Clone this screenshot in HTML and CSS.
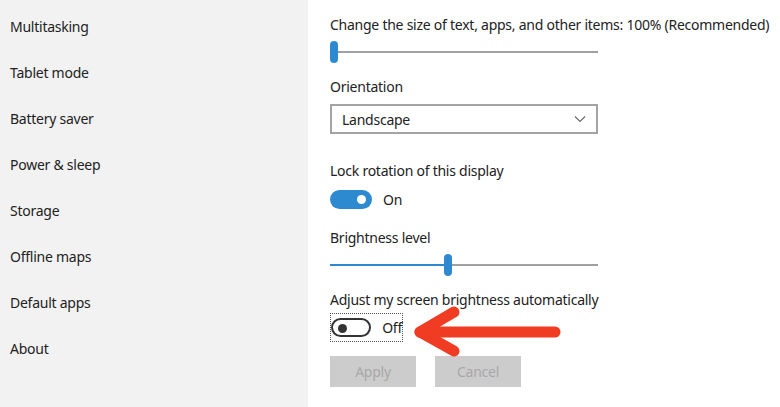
FILE: index.html
```html
<!DOCTYPE html>
<html>

<head>
    <meta charset="utf-8" />
    <title>Display settings</title>
    <meta name="viewport" content="width=device-width, initial-scale=1">
    <link rel="stylesheet" href="styles.css">
</head>

<body>
    <div class="page">
        <ul class="menu">
            <li>Multitasking</li>
            <li>Tablet mode</li>
            <li>Battery saver</li>
            <li>Power &amp; sleep</li>
            <li>Storage</li>
            <li>Offline maps</li>
            <li>Default apps</li>
            <li>About</li>
        </ul>

        <div class="content">
            <div class="label">Change the size of text, apps, and other items: 100% (Recommended)</div>
            <div class="slider slider-scale">
                <div class="track"></div>
                <div class="fill" style="width: 0px"></div>
                <div class="thumb" style="left: 0px"></div>
            </div>

            <div class="label label-orient">Orientation</div>
            <div class="select">
                <span>Landscape</span>
                <svg class="chevron" width="12" height="8" viewBox="0 0 12 8">
                    <polyline points="1,1.5 6,6.5 11,1.5" fill="none" stroke="#666" stroke-width="1.1" />
                </svg>
            </div>

            <div class="label label-lock">Lock rotation of this display</div>
            <div class="switch-row">
                <div class="switch on"><div class="knob"></div></div>
                <span class="state">On</span>
            </div>

            <div class="label label-bright">Brightness level</div>
            <div class="slider slider-bright">
                <div class="track"></div>
                <div class="fill" style="width: 118px"></div>
                <div class="thumb" style="left: 114px"></div>
            </div>

            <div class="label label-auto">Adjust my screen brightness automatically</div>
            <div class="switch-row focus">
                <div class="switch off"><div class="knob"></div></div>
                <span class="state">Off</span>
            </div>

            <div class="buttons">
                <button type="button" disabled>Apply</button>
                <button type="button" disabled>Cancel</button>
            </div>
        </div>

        <svg class="arrow" width="780" height="407" viewBox="0 0 780 407">
            <g fill="none" stroke="#f03c22" stroke-width="11" stroke-linecap="round" stroke-linejoin="round">
                <line x1="420" y1="332" x2="555" y2="332" />
                <polyline points="454,312 420,332 454,351" />
            </g>
        </svg>
    </div>
</body>

</html>
```

FILE: styles.css
```css
body {
    margin: 0;
    font-family: "Noto Sans", "Open Sans", sans-serif;
    font-size: 14px;
    letter-spacing: -0.25px;
    color: #222;
    background-color: #fff;
}

.page {
    position: relative;
    display: flex;
    width: 780px;
    height: 407px;
    overflow: hidden;
}

.menu {
    flex-shrink: 0;
    list-style-type: none;
    margin: 0;
    padding: 4px 0 0 10px;
    width: 298px;
    background-color: #f2f2f2;
}

.menu li {
    height: 46px;
    line-height: 46px;
}

.content {
    flex: 1;
    min-width: 0;
    padding: 15px 0 0 22px;
}

.label {
    height: 20px;
    line-height: 20px;
    white-space: nowrap;
}

.label-orient {
    margin-top: 14px;
}

.label-lock {
    margin-top: 27px;
}

.label-bright {
    margin-top: 19px;
}

.label-auto {
    margin-top: 14px;
}

/* sliders */
.slider {
    position: relative;
    width: 268px;
    height: 22px;
    margin-top: 6px;
}

.slider .track {
    position: absolute;
    left: 0;
    right: 0;
    top: 10px;
    height: 2px;
    background-color: #a0a0a0;
}

.slider .fill {
    position: absolute;
    left: 0;
    top: 10px;
    height: 2px;
    background-color: #2d89d0;
}

.slider .thumb {
    position: absolute;
    top: 0;
    width: 8px;
    height: 22px;
    border-radius: 4px;
    background-color: #2d89d0;
}

/* dropdown */
.select {
    display: flex;
    align-items: center;
    justify-content: space-between;
    box-sizing: border-box;
    width: 268px;
    height: 30px;
    margin-top: 7px;
    padding: 0 10px 0 10px;
    border: 2px solid #a3a3a3;
}

.chevron {
    display: block;
}

/* toggles */
.switch-row {
    display: flex;
    align-items: center;
    height: 20px;
    margin-top: 8px;
}

.switch {
    position: relative;
    box-sizing: border-box;
    width: 42px;
    height: 19px;
    border-radius: 10px;
}

.switch .knob {
    position: absolute;
    top: 4px;
    width: 9px;
    height: 9px;
    border-radius: 50%;
}

.switch.on {
    background-color: #2d89d0;
}

.switch.on .knob {
    top: 5px;
    right: 6px;
    background-color: #fff;
}

.switch.off {
    border: 2px solid #333;
}

.switch.off .knob {
    left: 5px;
    background-color: #333;
}

.state {
    margin-left: 11px;
}

.focus {
    box-sizing: border-box;
    width: 73px;
    height: 29px;
    margin-top: 3px;
    border: 1px dotted #555;
}

/* buttons */
.buttons {
    display: flex;
    gap: 19px;
    margin-top: 14px;
}

button {
    width: 86px;
    height: 31px;
    border: none;
    background-color: #cccccc;
    color: #a8a8a8;
    font-family: inherit;
    font-size: 14px;
    letter-spacing: inherit;
    padding: 0;
}

.arrow {
    position: absolute;
    left: 0;
    top: 0;
    pointer-events: none;
}
```
